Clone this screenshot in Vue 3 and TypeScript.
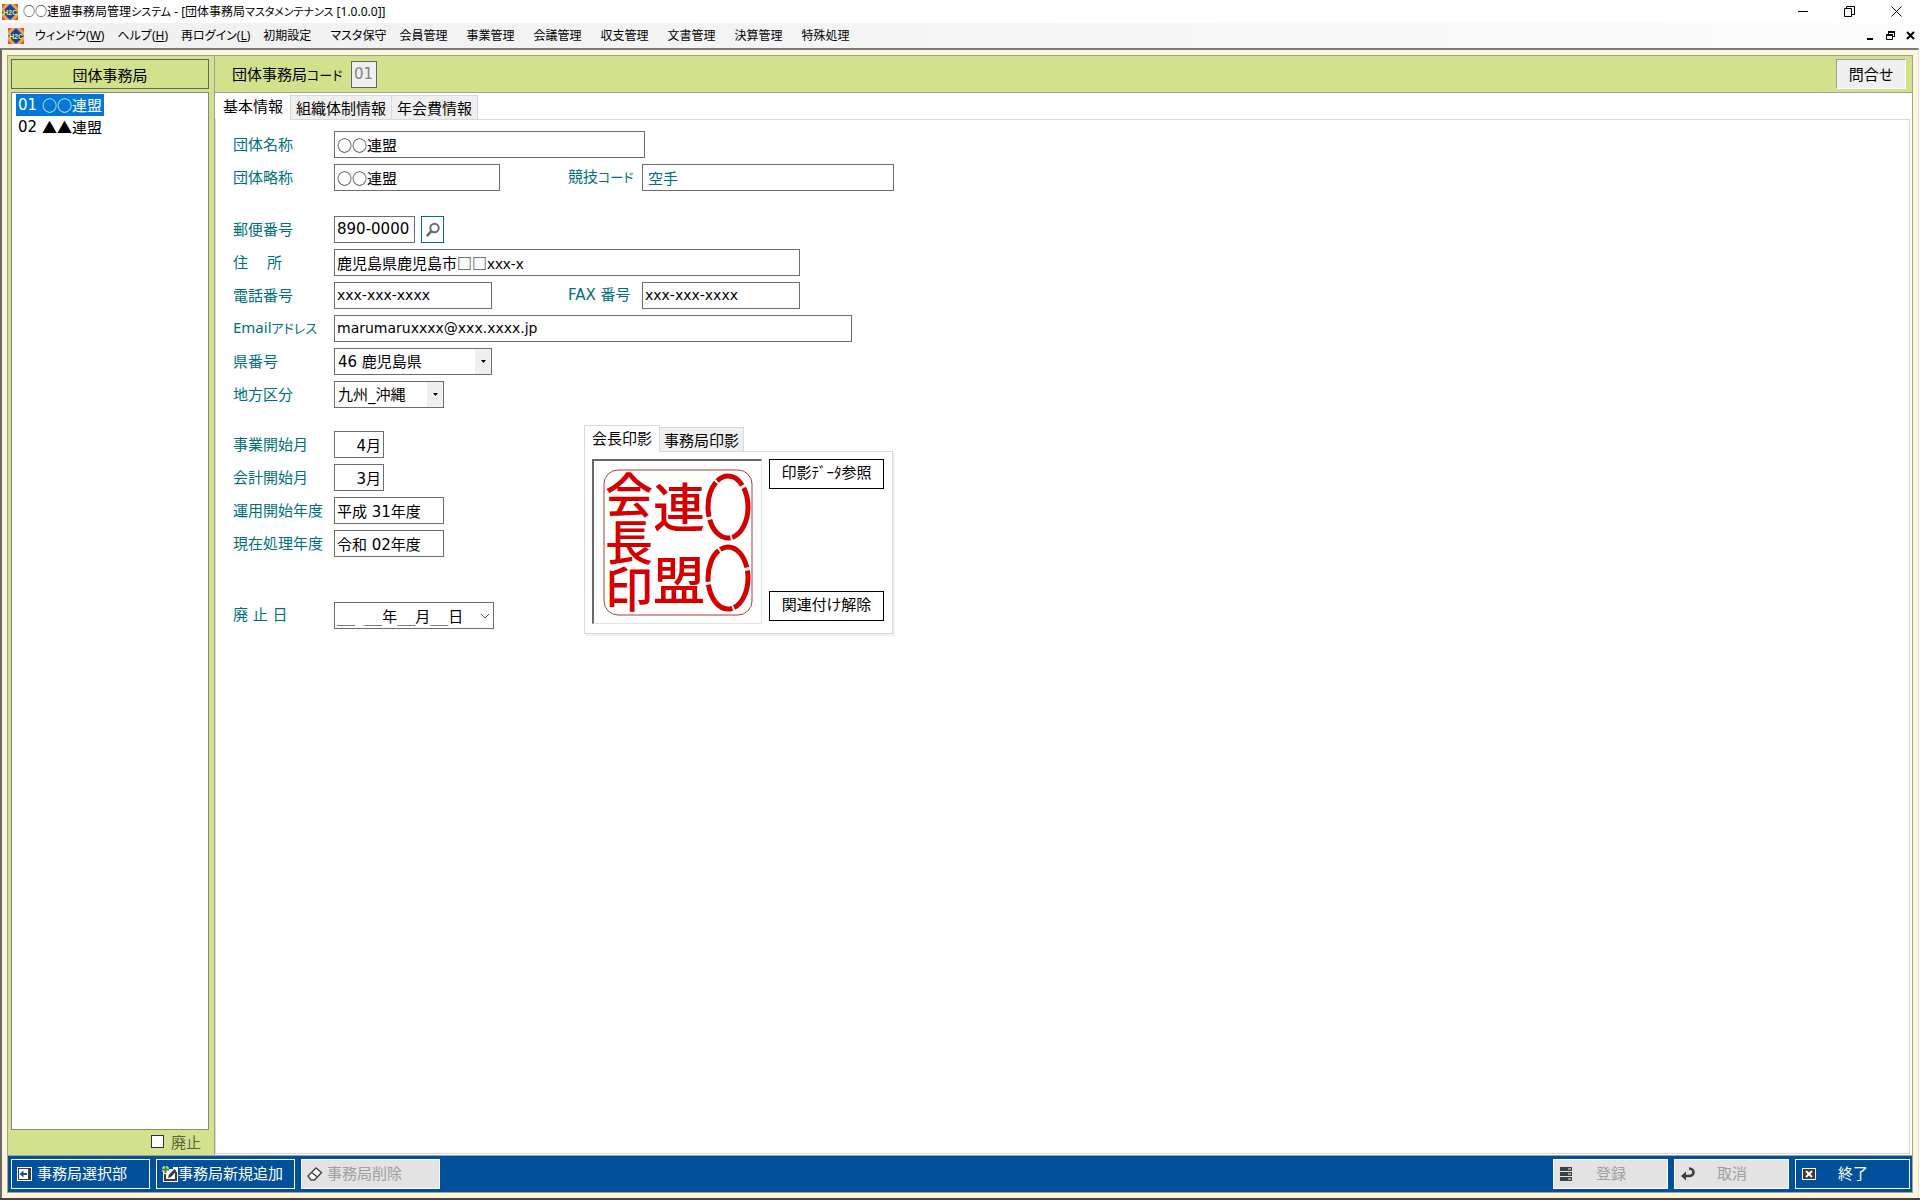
<script setup lang="ts">
import { ref } from 'vue'

interface MenuItem {
  label: string
  key?: string
  kana?: boolean
}

const menus: MenuItem[] = [
  { label: 'ウィンドウ', key: 'W', kana: true },
  { label: 'ヘルプ', key: 'H', kana: true },
  { label: '再ログイン', key: 'L', kana: true },
  { label: '初期設定' },
  { label: 'マスタ保守', kana: true },
  { label: '会員管理' },
  { label: '事業管理' },
  { label: '会議管理' },
  { label: '収支管理' },
  { label: '文書管理' },
  { label: '決算管理' },
  { label: '特殊処理' },
]

const offices = [
  { code: '01', name: '○○連盟' },
  { code: '02', name: '▲▲連盟' },
]
const selected = ref('01')

const tabs = ['基本情報', '組織体制情報', '年会費情報']
const activeTab = ref(0)
const sealTabs = ['会長印影', '事務局印影']
const activeSeal = ref(0)

const name = ref('○○連盟')
const shortName = ref('○○連盟')
const zip = ref('890-0000')
const address = ref('鹿児島県鹿児島市□□xxx-x')
const tel = ref('xxx-xxx-xxxx')
const fax = ref('xxx-xxx-xxxx')
const email = ref('marumaruxxxx@xxx.xxxx.jp')
const pref = ref('46 鹿児島県')
const region = ref('九州_沖縄')
const bizMonth = ref('4月')
const accMonth = ref('3月')
const startYear = ref('平成 31年度')
const currentYear = ref('令和 02年度')
const abolished = ref('__ __年__月__日')
const showAbolished = ref(false)
</script>

<template>
  <div class="window">
    <header class="titlebar">
      <svg class="appicon" viewBox="0 0 16 16" aria-hidden="true">
        <rect width="16" height="16" fill="#f9a04a" />
        <path d="M0 0h4L0 4zM16 0v4l-4-4zM0 16v-4l4 4zM16 16h-4l4-4z" fill="#dd5a20" />
        <path d="M8 0l8 8-8 8-8-8z" fill="#0a48b8" />
        <text x="8" y="11" text-anchor="middle">H2C</text>
      </svg>
      <h1>○○連盟事務局管理<span class="kana">システム</span> - [団体事務局<span class="kana">マスタメンテナンス</span> [1.0.0.0]]</h1>
      <div class="winbtns">
        <button type="button" aria-label="最小化">
          <svg viewBox="0 0 11 11"><path d="M0 5.500h10" /></svg>
        </button>
        <button type="button" aria-label="元に戻す">
          <svg viewBox="0 0 11 11"><path d="M.5 2.500h7v8h-7zM2.500 2.500v-2h8v8h-3" /></svg>
        </button>
        <button type="button" aria-label="閉じる">
          <svg viewBox="0 0 11 11"><path d="M.5.5l10 10M10.500.5l-10 10" /></svg>
        </button>
      </div>
    </header>

    <nav class="menubar">
      <svg class="appicon" viewBox="0 0 16 16" aria-hidden="true">
        <rect width="16" height="16" fill="#f9a04a" />
        <path d="M0 0h4L0 4zM16 0v4l-4-4zM0 16v-4l4 4zM16 16h-4l4-4z" fill="#dd5a20" />
        <path d="M8 0l8 8-8 8-8-8z" fill="#0a48b8" />
        <text x="8" y="11" text-anchor="middle">H2C</text>
      </svg>
      <div class="menus">
        <button v-for="m in menus" :key="m.label" type="button" :class="{ narrowgap: m.kana }">
          {{ m.label }}<template v-if="m.key">(<u>{{ m.key }}</u>)</template>
        </button>
      </div>
      <div class="mdibtns">
        <button type="button" aria-label="子ウィンドウを最小化">
          <svg viewBox="0 0 9 9"><path d="M1 8h6" stroke-width="2" /></svg>
        </button>
        <button type="button" aria-label="子ウィンドウを元に戻す">
          <svg viewBox="0 0 9 9"><path d="M2 1h7M0 4h7" stroke-width="2" /><path d="M2.500 1v2M8.500 1v5M8.500 5.500h-2M.5 4v4.500h6V4" /></svg>
        </button>
        <button type="button" aria-label="子ウィンドウを閉じる">
          <svg viewBox="0 0 9 9"><path d="M1 1l7 7M8 1l-7 7" stroke-width="2" /></svg>
        </button>
      </div>
    </nav>

    <div class="client">
      <div class="frame">
        <div class="body">
          <aside class="side">
            <h2>団体事務局</h2>
            <ul class="list">
              <li v-for="o in offices" :key="o.code">
                <button type="button" :class="{ on: selected === o.code }" @click="selected = o.code">
                  <span class="num">{{ o.code }}</span><span>{{ o.name }}</span>
                </button>
              </li>
            </ul>
            <label class="check"><input v-model="showAbolished" type="checkbox" />廃止</label>
          </aside>

          <main class="main">
            <div class="head">
              <label for="code">団体事務局<span class="kana">コード</span></label>
              <input id="code" class="num code" value="01" disabled />
              <button type="button" class="inquiry">問合せ</button>
            </div>

            <div class="tabs" role="tablist">
              <button
                v-for="(t, i) in tabs"
                :key="t"
                type="button"
                role="tab"
                :aria-selected="activeTab === i"
                :class="{ on: activeTab === i }"
                @click="activeTab = i"
              >{{ t }}</button>
            </div>

            <form class="page" @submit.prevent>
              <div class="row">
                <label for="name">団体名称</label>
                <input id="name" v-model="name" class="w-name" />
              </div>
              <div class="row">
                <label for="short">団体略称</label>
                <div class="first"><input id="short" v-model="shortName" class="w-short" /></div>
                <label for="sport" class="second">競技<span class="kana">コード</span></label>
                <input id="sport" class="w-sport teal" value="空手" readonly />
              </div>
              <div class="row gap-l">
                <label for="zip">郵便番号</label>
                <input id="zip" v-model="zip" class="w-zip num" />
                <button type="button" class="search" aria-label="住所検索">
                  <svg viewBox="0 0 16 16" width="16" height="16">
                    <circle cx="9.500" cy="6" r="4.200" fill="none" stroke="#6b6b6b" stroke-width="2" />
                    <path d="M6.500 9.200L1.800 14" stroke="#6b6b6b" stroke-width="2.600" />
                  </svg>
                </button>
              </div>
              <div class="row">
                <label for="address">住　 所</label>
                <input id="address" v-model="address" class="w-address" />
              </div>
              <div class="row">
                <label for="tel">電話番号</label>
                <div class="first"><input id="tel" v-model="tel" class="w-tel latin" /></div>
                <label for="fax" class="second num">FAX 番号</label>
                <input id="fax" v-model="fax" class="w-tel latin" />
              </div>
              <div class="row">
                <label for="email">Email<span class="kana">アドレス</span></label>
                <input id="email" v-model="email" class="w-email latin" />
              </div>
              <div class="row">
                <label for="pref">県番号</label>
                <div class="combo w-tel">
                  <select id="pref" v-model="pref" class="num"><option>46 鹿児島県</option></select>
                  <span class="drop"><svg viewBox="0 0 5 3" width="5" height="3"><path d="M0 0h5L2.500 3z" /></svg></span>
                </div>
              </div>
              <div class="row">
                <label for="region">地方区分</label>
                <div class="combo w-year">
                  <select id="region" v-model="region" class="num"><option>九州_沖縄</option></select>
                  <span class="drop"><svg viewBox="0 0 5 3" width="5" height="3"><path d="M0 0h5L2.500 3z" /></svg></span>
                </div>
              </div>

              <div class="lower">
                <div class="terms">
                  <div class="row">
                    <label for="biz">事業開始月</label>
                    <input id="biz" v-model="bizMonth" class="w-month num" />
                  </div>
                  <div class="row">
                    <label for="acc">会計開始月</label>
                    <input id="acc" v-model="accMonth" class="w-month num" />
                  </div>
                  <div class="row">
                    <label for="start">運用開始年度</label>
                    <input id="start" v-model="startYear" class="w-year num" />
                  </div>
                  <div class="row">
                    <label for="current">現在処理年度</label>
                    <input id="current" v-model="currentYear" class="w-year num" />
                  </div>
                  <div class="row gap-xl">
                    <label for="abolish" class="num">廃 止 日</label>
                    <div class="combo w-date">
                      <input id="abolish" v-model="abolished" class="date" />
                      <button type="button" class="chev" aria-label="日付を選択">
                        <svg viewBox="0 0 10 6" width="10" height="6"><path d="M1 1l4 4 4-4" fill="none" stroke="#555" /></svg>
                      </button>
                    </div>
                  </div>
                </div>

                <section class="seal">
                  <div class="tabs small" role="tablist">
                    <button
                      v-for="(t, i) in sealTabs"
                      :key="t"
                      type="button"
                      role="tab"
                      :aria-selected="activeSeal === i"
                      :class="{ on: activeSeal === i }"
                      @click="activeSeal = i"
                    >{{ t }}</button>
                  </div>
                  <div class="sealbody">
                    <div class="stamp">
                      <svg viewBox="0 0 168 162" width="168" height="162" role="img" aria-label="会長印">
                        <rect x="10" y="9" width="148" height="145" rx="14" fill="none" stroke="#b0393b" />
                        <g fill="#d40000">
                          <text font-size="48"><tspan x="35" y="52">会</tspan><tspan x="35" y="99">長</tspan><tspan x="35" y="146">印</tspan></text>
                          <text font-size="52"><tspan x="85" y="66">連</tspan><tspan x="85" y="139">盟</tspan></text>
                        </g>
                        <g fill="none" stroke="#d40000" stroke-width="5">
                          <ellipse cx="134" cy="46" rx="20" ry="31" stroke-dasharray="36 2 30 3" />
                          <ellipse cx="134" cy="117" rx="20" ry="31" stroke-dasharray="34 2 38 3" />
                        </g>
                      </svg>
                    </div>
                    <div class="sealbtns">
                      <button type="button">印影ﾃﾞｰﾀ参照</button>
                      <button type="button">関連付け解除</button>
                    </div>
                  </div>
                </section>
              </div>
            </form>
          </main>
        </div>

        <footer class="actions">
          <button type="button" class="wide">
            <svg class="ic" viewBox="0 0 16 16">
              <rect x=".5" y="1.500" width="14" height="13" fill="#3a3a40" stroke="#fff" />
              <rect x="2" y="3" width="9" height="10" fill="#fff" />
              <path d="M2.500 8L6.500 4.500V7H10v2H6.500v2.500z" fill="#1450a0" />
            </svg>
            <span>事務局選択部</span>
          </button>
          <button type="button" class="wide tight">
            <svg class="ic" viewBox="0 0 16 16">
              <path d="M1 6h2V3h8V1h5v15H1z" fill="#fff" />
              <path d="M3 8v6h11V6" fill="none" stroke="#3a3a40" stroke-width="2" />
              <path d="M6 12l1-3.500L12.500 3l2 2L9 11z" fill="#3a3a40" />
              <path d="M3.500 0v7M0 3.500h7" stroke="#fff" stroke-width="4" />
              <path d="M3.500 0v7M0 3.500h7" stroke="#2f8a2f" stroke-width="2" />
            </svg>
            <span>事務局新規追加</span>
          </button>
          <button type="button" class="wide" disabled>
            <svg class="ic" viewBox="0 0 16 16">
              <path d="M1 10L9 2l5.500 4.500-7 7.500H4z" fill="#fff" stroke="#444" stroke-width="1.400" />
              <path d="M4.500 6.500l6 4.500" stroke="#444" stroke-width="1.400" />
            </svg>
            <span>事務局削除</span>
          </button>
          <div class="spacer"></div>
          <button type="button" class="narrow" disabled>
            <svg class="ic" viewBox="0 0 16 16">
              <path d="M1 1h12v4H1zM1 6h12v4H1zM1 11h12v4H1z" fill="#3f3f44" />
              <path d="M9 3h3M9 8h3M9 13h3" stroke="#fff" />
            </svg>
            <span>登録</span>
          </button>
          <button type="button" class="narrow" disabled>
            <svg class="ic" viewBox="0 0 16 16">
              <path d="M9 2.500c6 0 6 7.500 0 7.500H4" fill="none" stroke="#3f3f44" stroke-width="2.600" />
              <path d="M6 5.500L1 10l5 4.500z" fill="#3f3f44" />
            </svg>
            <span>取消</span>
          </button>
          <button type="button" class="narrow">
            <svg class="ic" viewBox="0 0 16 16">
              <rect x="1.500" y="2.500" width="13" height="11" fill="#3a3a40" stroke="#fff" />
              <path d="M5 5l6 6M11 5l-6 6" stroke="#fff" stroke-width="2" />
            </svg>
            <span>終了</span>
          </button>
        </footer>
      </div>
    </div>
  </div>
</template>

<style>
body {
  margin: 0;
  background: #fff;
}
</style>

<style scoped>
.window {
  display: flex;
  flex-direction: column;
  box-sizing: border-box;
  min-height: 100vh;
  border-bottom: 2px solid #474247;
  color: #000;
  font: 15px/20px 'Noto Sans', 'Noto Sans CJK JP', sans-serif;
  font-feature-settings: 'palt' 1;
}
*,
*::before {
  box-sizing: border-box;
}
button,
input,
select {
  margin: 0;
  padding: 0;
  border: 0;
  border-radius: 0;
  background: none;
  color: inherit;
  font: inherit;
  font-feature-settings: inherit;
  outline: 0;
}
h1,
h2 {
  margin: 0;
  font: inherit;
}
input.num,
select.num,
.num {
  font-family: 'DejaVu Sans', 'Noto Sans CJK JP', sans-serif;
}
.kana {
  font-size: 13px;
}
.titlebar {
  display: flex;
  align-items: center;
  height: 23px;
  padding-left: 2px;
  font-size: 12px;
}
.appicon {
  flex: none;
  width: 16px;
  height: 16px;
}
.appicon text {
  fill: #ffee22;
  font: bold 7px 'Liberation Sans', sans-serif;
}
.titlebar h1 {
  flex: 1;
  padding-left: 5px;
}
.titlebar .kana {
  font-size: 11px;
}
.winbtns {
  display: flex;
}
.winbtns button {
  display: flex;
  align-items: center;
  justify-content: center;
  width: 46px;
  height: 23px;
}
.winbtns svg {
  width: 11px;
  height: 11px;
  fill: none;
  stroke: #000;
}
.winbtns button:last-child {
  width: 48px;
}
.menubar {
  display: flex;
  align-items: center;
  height: 25px;
  padding: 0 5px 0 8px;
  background: linear-gradient(90deg, #f0f0f0, #fcfcfc);
  font-size: 12px;
}
.menus {
  display: flex;
  flex: 1;
  gap: 19px;
  padding-left: 11px;
}
.menus .narrowgap {
  margin-right: -6px;
}
.mdibtns {
  display: flex;
  gap: 11px;
}
.mdibtns button {
  display: flex;
}
.mdibtns svg {
  width: 9px;
  height: 9px;
  fill: none;
  stroke: #000;
}
.client {
  display: flex;
  flex: 1;
  padding: 5px;
  border: 2px solid #696969;
  border-top-color: #7c7c7c;
  border-right: 1px solid #e3e3e3;
  border-bottom: 0;
  margin-right: 1px;
  background: #fff5d7;
}
.frame {
  display: flex;
  flex: 1;
  flex-direction: column;
  border: 1px solid #a0a0a0;
}
.body {
  display: flex;
  flex: 1;
}
.side {
  display: flex;
  flex-direction: column;
  width: 206px;
  padding: 3px 5px 2px 3px;
  background: #d2e18c;
}
.side h2 {
  height: 30px;
  border: 1px solid #646464;
  line-height: 30px;
  text-align: center;
}
.list {
  flex: 1;
  margin: 3px 0 0;
  padding: 1px 4px;
  border: 1px solid #828790;
  background: #fff;
  list-style: none;
}
.list li {
  display: flex;
}
.list button {
  display: flex;
  gap: 5px;
  height: 22px;
  padding: 0 2px;
  line-height: 22px;
}
.list button.on {
  background: #0078d7;
  color: #fff;
}
.check {
  display: flex;
  align-items: center;
  justify-content: flex-end;
  gap: 7px;
  height: 23px;
  padding-right: 8px;
  color: #5b6440;
}
.check input,
.check input:checked {
  appearance: none;
  width: 13px;
  height: 13px;
  border: 1px solid #333;
  background: #fff;
}
.check input:checked {
  background: #333;
}
.main {
  display: flex;
  flex: 1;
  flex-direction: column;
  padding-right: 2px;
  border-left: 1px solid #a0a0a0;
  background: #fff;
}
.head {
  display: flex;
  align-items: center;
  height: 37px;
  margin-right: -2px;
  padding: 0 6px 0 17px;
  border-bottom: 1px solid #a0a0a0;
  background: #d2e18c;
}
.head label {
  width: 119px;
}
.head input.code {
  width: 26px;
  height: 27px;
  padding: 0 0 1px 2px;
  border: 1px solid #646464;
  background: #f0f0f0;
  color: #838383;
}
.inquiry {
  width: 70px;
  height: 30px;
  margin-left: auto;
  border: 1px solid #fff;
  border-top-color: #a0a0a0;
  border-left-color: #a0a0a0;
  background: #f0f0f0;
}
.tabs {
  display: flex;
  align-items: flex-end;
  height: 26px;
  padding-left: 1px;
}
.tabs button {
  height: 24px;
  padding: 0 5px;
  border: 1px solid #d9d9d9;
  border-left-width: 0;
  border-bottom: 0;
  background: #f0f0f0;
}
.tabs button.on {
  z-index: 1;
  height: 26px;
  margin-bottom: -1px;
  padding: 0 7px 3px;
  border-top-color: #fff;
  background: #fff;
}
.page {
  flex: 1;
  padding: 8px 17px 0;
  border: 1px solid #d9d9d9;
  margin-bottom: 1px;
}
.row {
  display: flex;
  align-items: center;
  height: 33px;
}
.row > label {
  width: 101px;
  padding-bottom: 2px;
  color: #007078;
  white-space: pre;
}
.row input,
.row select {
  width: 100%;
  height: 27px;
  padding: 0 2px 1px;
  border: 1px solid #6e6e6e;
  background: #fff;
}
.row .first {
  width: 234px;
}
.row > label.second {
  width: 74px;
}
.gap-l {
  margin-top: 19px;
}
.gap-xl {
  margin-top: 39px;
}
.row .w-name {
  width: 311px;
}
.row .w-short {
  width: 166px;
}
.row .w-sport {
  width: 252px;
  padding-left: 5px;
}
.row .teal {
  color: #007078;
}
.row .w-zip {
  width: 81px;
}
.row .w-address {
  width: 466px;
}
.row .w-tel {
  width: 158px;
}
.row .w-email {
  width: 518px;
}
.row .w-year {
  width: 110px;
}
.row .w-month {
  width: 50px;
  text-align: right;
}
.row .w-date {
  width: 160px;
}
.row .latin {
  font: 14px/20px 'DejaVu Sans', sans-serif;
}
.search {
  display: flex;
  align-items: center;
  justify-content: center;
  width: 23px;
  height: 27px;
  margin-left: 6px;
  border: 1px solid #007078;
}
.combo {
  position: relative;
}
.combo select {
  appearance: none;
  padding: 0 3px;
}
.drop {
  position: absolute;
  top: 1px;
  right: 1px;
  bottom: 1px;
  display: flex;
  align-items: center;
  justify-content: center;
  width: 16px;
  background: #f0f0f0;
  pointer-events: none;
}
.row input.date {
  font-family: 'DejaVu Sans Mono', 'Noto Sans CJK JP', monospace;
}
.chev {
  position: absolute;
  top: 1px;
  right: 1px;
  bottom: 1px;
  display: flex;
  align-items: center;
  justify-content: center;
  width: 16px;
}
.lower {
  display: flex;
  align-items: flex-start;
  padding-top: 17px;
}
.terms {
  width: 351px;
}
.seal {
  margin-top: -3px;
}
.tabs.small {
  padding-left: 0;
}
.tabs.small button {
  padding: 0 4px;
}
.tabs.small button.on {
  height: 27px;
  padding: 0 7px 3px;
  border-left-width: 1px;
  border-color: #d9d9d9;
}
.sealbody {
  display: flex;
  gap: 7px;
  width: 309px;
  height: 183px;
  padding: 7px;
  border: 1px solid #d9d9d9;
  box-shadow: 2px 2px 0 #f0f0f0;
}
.stamp {
  width: 170px;
  height: 165px;
  border: 1px solid #e3e3e3;
  border-top: 2px solid #696969;
  border-left: 2px solid #696969;
}
.stamp svg {
  display: block;
  overflow: visible;
}
.stamp text {
  font-family: 'Noto Sans CJK JP', sans-serif;
  font-weight: 500;
  text-anchor: middle;
}
.sealbtns {
  display: flex;
  flex-direction: column;
  justify-content: space-between;
  height: 162px;
}
.sealbtns button {
  width: 115px;
  height: 30px;
  padding-bottom: 5px;
  border: 1px solid #000;
}
.actions {
  display: flex;
  align-items: center;
  gap: 6px;
  height: 37px;
  padding: 0 2px 0 3px;
  border-top: 1px solid #a0a0a0;
  background: #00519a;
  color: #fff;
}
.actions button {
  display: flex;
  align-items: center;
  height: 30px;
  padding-left: 5px;
  border: 1px solid #fff;
}
.actions button:disabled {
  background: #e3e3e3;
  color: #a0a0a0;
}
.actions span {
  padding: 0 0 2px 4px;
}
.ic {
  flex: none;
  width: 16px;
  height: 16px;
}
.wide {
  width: 139px;
}
.actions .tight span {
  padding-left: 0;
}
.narrow {
  width: 115px;
}
.actions .narrow span {
  flex: 1;
  padding-right: 24px;
  text-align: center;
}
.spacer {
  flex: 1;
}
</style>
